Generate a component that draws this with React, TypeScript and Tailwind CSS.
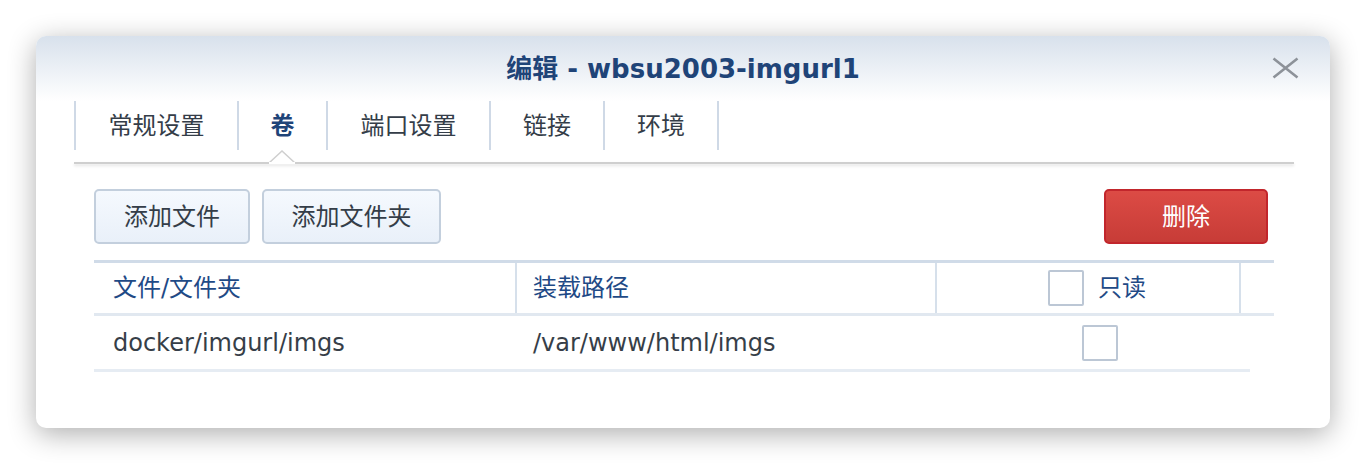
import React from "react";

const font = { fontFamily: '"DejaVu Sans", "Noto Sans CJK SC", sans-serif' };

const tabs = [
  { label: "常规设置", w: "w-[163px]" },
  { label: "卷", w: "w-[89px]", active: true },
  { label: "端口设置", w: "w-[163px]" },
  { label: "链接", w: "w-[114px]" },
  { label: "环境", w: "w-[114px]" },
];

function Checkbox() {
  return <div className="h-[36px] w-[36px] rounded-[2px] border-2 border-[#bcc7d5] bg-white" />;
}

export default function App() {
  return (
    <div className="h-[464px] w-[1366px] overflow-hidden bg-white pl-[36px] pt-[36px]" style={font}>
      <div className="flex h-[392px] w-[1294px] flex-col overflow-hidden rounded-[10px] bg-white shadow-[0_6px_28px_rgba(0,0,0,0.32)]">
        {/* header */}
        <div className="relative flex h-[65px] items-center justify-center bg-gradient-to-b from-[#d8e1ec] to-white">
          <h1 className="mt-[2px] text-[26px] font-bold text-[#1f4478]">编辑 - wbsu2003-imgurl1</h1>
          <button type="button" className="absolute right-[31px] top-[21px]" aria-label="close">
            <svg width="27" height="22" viewBox="0 0 27 22">
              <path d="M1.5 1.5 L25.5 20.5 M25.5 1.5 L1.5 20.5" stroke="#8d9299" strokeWidth="2.6" />
            </svg>
          </button>
        </div>

        {/* tabs */}
        <div className="ml-[38px] mr-[36px]">
          <div className="flex h-[49px] border-l-2 border-[#cfd9e6]">
            {tabs.map((t) => (
              <div
                key={t.label}
                className={`${t.w} flex items-center justify-center border-r-2 border-[#cfd9e6] text-[24px] ${
                  t.active ? "font-bold text-[#1f4478]" : "text-[#343d48]"
                }`}
              >
                {t.label}
              </div>
            ))}
          </div>
          <div className="relative mt-[12px] h-[2px] bg-[#cfcfcf] shadow-[0_2px_3px_rgba(0,0,0,0.12)]">
            <svg className="absolute left-[195px] top-[-12px]" width="26" height="14" viewBox="0 0 26 14">
              <path d="M0 13 L13 1 L26 13" fill="white" stroke="#cfcfcf" strokeWidth="1.5" />
              <rect x="0" y="12" width="26" height="2" fill="white" />
            </svg>
          </div>
        </div>

        {/* toolbar */}
        <div className="ml-[58px] mr-[62px] mt-[25px] flex items-center">
          <button
            type="button"
            className="h-[55px] w-[156px] rounded-[5px] border-2 border-[#c3cfdd] bg-gradient-to-b from-[#f5f9fe] to-[#e9f0f9] text-[24px] text-[#343d48]"
          >
            添加文件
          </button>
          <button
            type="button"
            className="ml-[12px] h-[55px] w-[179px] rounded-[5px] border-2 border-[#c3cfdd] bg-gradient-to-b from-[#f5f9fe] to-[#e9f0f9] text-[24px] text-[#343d48]"
          >
            添加文件夹
          </button>
          <button
            type="button"
            className="ml-auto h-[55px] w-[164px] rounded-[5px] border-2 border-[#c2262c] bg-gradient-to-b from-[#dc4b45] to-[#c73c37] text-[24px] text-white"
          >
            删除
          </button>
        </div>

        {/* table */}
        <div className="ml-[58px] mt-[16px] w-[1180px]">
          <div className="flex h-[56px] border-y-[3px] border-t-[#d0dbe8] border-b-[#e1e8f0] text-[24px] text-[#1f4a86]">
            <div className="flex w-[423px] items-center border-r-2 border-[#d6e0eb] pl-[19px]">文件/文件夹</div>
            <div className="flex w-[420px] items-center border-r-2 border-[#d6e0eb] pl-[16px]">装载路径</div>
            <div className="flex w-[304px] items-center border-r-2 border-[#d6e0eb] pl-[111px]">
              <Checkbox />
              <span className="ml-[14px]">只读</span>
            </div>
            <div className="flex-1" />
          </div>
          <div className="flex h-[56px] w-[1156px] border-b-[3px] border-[#e6ecf3] text-[24px] text-[#363e48]">
            <div className="flex w-[423px] items-center pl-[19px]">docker/imgurl/imgs</div>
            <div className="flex w-[420px] items-center pl-[16px]">/var/www/html/imgs</div>
            <div className="flex flex-1 items-center pl-[145px]">
              <Checkbox />
            </div>
          </div>
        </div>
      </div>
    </div>
  );
}
